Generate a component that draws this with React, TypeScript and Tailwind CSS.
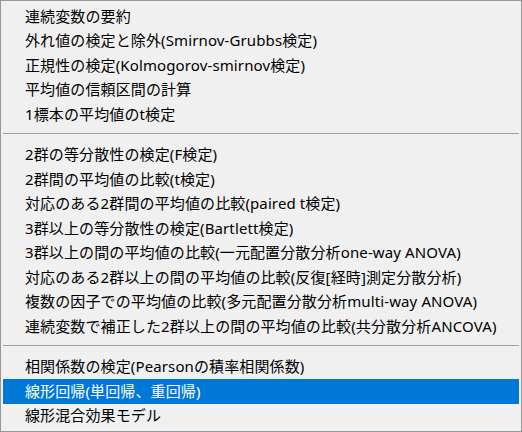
const groups: string[][] = [
  [
    '連続変数の要約',
    '外れ値の検定と除外(Smirnov-Grubbs検定)',
    '正規性の検定(Kolmogorov-smirnov検定)',
    '平均値の信頼区間の計算',
    '1標本の平均値のt検定',
  ],
  [
    '2群の等分散性の検定(F検定)',
    '2群間の平均値の比較(t検定)',
    '対応のある2群間の平均値の比較(paired t検定)',
    '3群以上の等分散性の検定(Bartlett検定)',
    '3群以上の間の平均値の比較(一元配置分散分析one-way ANOVA)',
    '対応のある2群以上の間の平均値の比較(反復[経時]測定分散分析)',
    '複数の因子での平均値の比較(多元配置分散分析multi-way ANOVA)',
    '連続変数で補正した2群以上の間の平均値の比較(共分散分析ANCOVA)',
  ],
  [
    '相関係数の検定(Pearsonの積率相関係数)',
    '線形回帰(単回帰、重回帰)',
    '線形混合効果モデル',
  ],
]

const active = '線形回帰(単回帰、重回帰)'

const MenuItem = ({ label }: { label: string }) => {
  const on = label === active
  return (
    <div
      className={`flex items-center h-[24.5px] pl-[22px] whitespace-nowrap ${
        on ? 'bg-[#0078d7] text-white' : 'text-black'
      }`}
    >
      {label}
    </div>
  )
}

export default function App() {
  return (
    <div className="w-[522px] h-[432px] bg-white">
      <div
        className="flex flex-col w-full h-full bg-[#f0f0f0] border border-[#979797] px-[2px] py-[3px] text-[15px] leading-none tracking-[0.12px]"
        style={{ fontFamily: '"Noto Sans", "Noto Sans CJK JP", sans-serif' }}
      >
        {groups.map((items, gi) => (
          <div key={gi} className="flex flex-col">
            {gi > 0 && (
              <div className="h-[16px] flex flex-col pt-[6px]">
                <div className="h-px bg-[#a0a0a0]" />
              </div>
            )}
            {items.map((label) => (
              <MenuItem key={label} label={label} />
            ))}
          </div>
        ))}
      </div>
    </div>
  )
}
